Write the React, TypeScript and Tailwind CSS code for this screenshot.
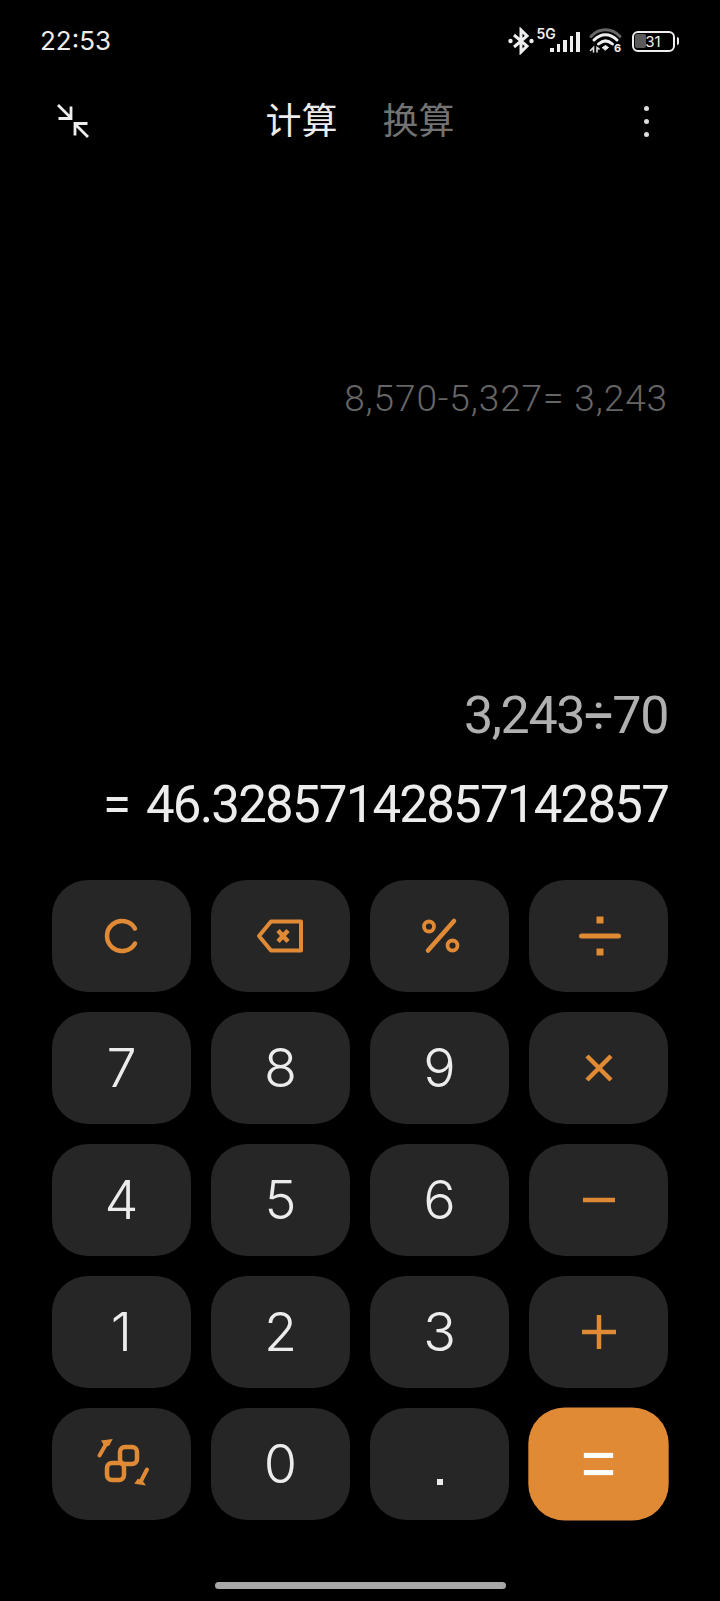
import React from "react";

const O = "#e08a36";

function Key({ children, cls = "" }: { children: React.ReactNode; cls?: string }) {
  return (
    <div className={`flex h-[112px] items-center justify-center rounded-[36px] text-[54px] font-light leading-none text-[#ececec] ${cls || "bg-[#262626]"}`}>
      {children}
    </div>
  );
}

const Icon = ({ children }: { children: React.ReactNode }) => (
  <svg width={60} height={60} viewBox="0 0 60 60" fill="none" stroke={O} strokeWidth="4">{children}</svg>
);

export default function App() {
  return (
    <div className="flex h-[1601px] w-[720px] flex-col overflow-hidden bg-black font-['Inter','Noto_Sans_CJK_SC',sans-serif] text-white">
      {/* status bar */}
      <div className="flex h-[82px] shrink-0 items-center justify-between pl-[40px] pr-[41px]">
        <span className="text-[26px] leading-none text-[#ececec]">22:53</span>
        <div className="flex items-center">
          <svg width="26" height="28" viewBox="0 0 26 28" fill="none" stroke="#eee" strokeWidth="3" className="mr-[3px]">
            <path d="M6 8 L19 19 L13 25 V3 L19 9 L6 20" />
            <circle cx="2.5" cy="14" r="2.2" fill="#eee" stroke="none" />
            <circle cx="23.5" cy="14" r="2.2" fill="#eee" stroke="none" />
          </svg>
          <div className="relative mr-[9px] h-[26px] w-[43px]">
            <span className="absolute left-0 top-[-1px] text-[14px] font-semibold leading-[14px] text-[#eee]">5G</span>
            <div className="absolute bottom-[2px] right-0 flex items-end gap-[3px]">
              <div className="h-[4px] w-[3.5px] bg-[#eee]" />
              <div className="h-[8px] w-[3.5px] bg-[#eee]" />
              <div className="h-[12px] w-[3.5px] bg-[#eee]" />
              <div className="h-[16px] w-[3.5px] bg-[#eee]" />
              <div className="h-[20px] w-[3.5px] bg-[#eee]" />
            </div>
          </div>
          <svg width="33" height="26" viewBox="0 0 33 26" fill="none" strokeLinecap="round" className="mr-[10px]">
            <path d="M2 8.5 C10 -0.5 23 -0.5 31 8.5" stroke="#666" strokeWidth="3" />
            <path d="M5 12 C12 5 21 5 28 12" stroke="#eee" strokeWidth="3" />
            <path d="M9.5 16 C14 12 19 12 23.5 16" stroke="#eee" strokeWidth="3" />
            <path d="M13.5 19.5 L16.5 17.5 L19.5 19.5 L16.5 22 Z" fill="#eee" stroke="#eee" strokeWidth="1" />
            <path d="M1.5 22.5 L4.5 19.5 V24 M8 24 V19.5 L10 21" stroke="#ddd" strokeWidth="1.6" />
            <text x="25" y="24" fontSize="11" fontWeight="700" fill="#eee" fontFamily="Inter" stroke="none">6</text>
          </svg>
          <div className="relative flex h-[21px] w-[43px] items-center justify-center rounded-[6px] border-[2px] border-[#eee]">
            <div className="absolute bottom-[1.5px] left-[1.5px] top-[1.5px] w-[11px] rounded-[2px] bg-[#5a5a5a]" />
            <span className="relative text-[15px] leading-none text-[#eee]">31</span>
          </div>
          <div className="ml-[2px] h-[8px] w-[2.5px] rounded-r-[2px] bg-[#eee]" />
        </div>
      </div>

      {/* header */}
      <div className="grid h-[78px] shrink-0 grid-cols-[1fr_auto_1fr] items-center">
        <div className="flex pl-[55px]">
          <svg width="36" height="36" viewBox="0 0 36 36" fill="none" stroke="#eee" strokeWidth="2.8">
            <path d="M3 2 L16 15 M3.5 15.5 H16 V3.5" />
            <path d="M33 34 L20 21 M32.5 20.5 H20 V32.5" />
          </svg>
        </div>
        <div className="flex items-center gap-[45px] text-[36px] leading-none">
          <span className="text-[#ececec]">计算</span>
          <span className="text-[#737373]">换算</span>
        </div>
        <div className="flex justify-end pr-[71px]">
          <div className="flex flex-col gap-[8px]">
            <div className="h-[5px] w-[5px] rounded-full bg-[#ddd]" />
            <div className="h-[5px] w-[5px] rounded-full bg-[#ddd]" />
            <div className="h-[5px] w-[5px] rounded-full bg-[#ddd]" />
          </div>
        </div>
      </div>

      {/* display */}
      <div className="flex flex-1 flex-col items-end pr-[52px] font-['Roboto','Noto_Sans_CJK_SC',sans-serif]">
        <div className="mt-[217px] text-[37px] font-light leading-[44px] tracking-[0.9px] text-[#666666]">8,570-5,327= 3,243</div>
        <div className="mt-[265px] text-[52px] leading-[60px] tracking-[-1.4px] text-[#b0b0b0]">3,243÷70</div>
        <div className="mt-[29px] text-[51px] leading-[60px] tracking-[-1.8px] text-[#ececec] [word-spacing:6px]">= 46.32857142857142857</div>
      </div>

      {/* keypad */}
      <div className="grid shrink-0 grid-cols-4 gap-x-[20px] gap-y-[20px] px-[52px]">
        <Key>
          <Icon><path d="M43 22.5 A15 15 0 1 0 43 37.5" strokeWidth="4.5" strokeLinecap="round" /></Icon>
        </Key>
        <Key>
          <Icon>
            <path d="M20 15.5 H50 V44.5 H20 L8 30 Z" strokeLinejoin="round" />
            <path d="M27 24.5 L37 35.5 M37 24.5 L27 35.5" strokeWidth="4.5" />
          </Icon>
        </Key>
        <Key>
          <Icon>
            <circle cx="19" cy="20.5" r="5" strokeWidth="3.8" />
            <circle cx="42.5" cy="39.5" r="5" strokeWidth="3.8" />
            <path d="M44 15 L18 44.5" strokeWidth="4.5" strokeLinecap="round" />
          </Icon>
        </Key>
        <Key>
          <Icon>
            <path d="M12.5 30 H49.5" strokeWidth="5" strokeLinecap="round" />
            <rect x="27.5" y="10.5" width="7" height="7" fill={O} stroke="none" />
            <rect x="27.5" y="42.5" width="7" height="7" fill={O} stroke="none" />
          </Icon>
        </Key>
        <Key>7</Key>
        <Key>8</Key>
        <Key>9</Key>
        <Key>
          <Icon><path d="M18 18 L42 42 M42 18 L18 42" strokeWidth="4.5" /></Icon>
        </Key>
        <Key>4</Key>
        <Key>5</Key>
        <Key>6</Key>
        <Key>
          <Icon><path d="M14 30 H46" strokeWidth="4.5" /></Icon>
        </Key>
        <Key>1</Key>
        <Key>2</Key>
        <Key>3</Key>
        <Key>
          <Icon><path d="M13 30 H47 M30 13 V47" strokeWidth="4.5" /></Icon>
        </Key>
        <Key>
          <Icon>
            <rect x="15" y="29" width="17" height="17" rx="5" strokeWidth="4.5" />
            <rect x="28" y="13" width="17" height="17" rx="5" strokeWidth="4.5" />
            <path d="M7.5 21.5 L13.5 11" strokeLinecap="round" />
            <path d="M9 6.5 L20.7 5 L17.3 11.5 L13 13 Z" fill={O} stroke="none" />
            <path d="M55 35.5 L49 47" strokeLinecap="round" />
            <path d="M54 51.5 L42.3 49.8 L45.7 44.8 L50 46 Z" fill={O} stroke="none" />
          </Icon>
        </Key>
        <Key>0</Key>
        <Key>
          <div className="mt-[35px] h-[6px] w-[6px] bg-[#ececec]" />
        </Key>
        <Key cls="bg-[#e08a36] scale-[1.01]">
          <div className="flex flex-col gap-[12px]">
            <div className="h-[5px] w-[29px] bg-white" />
            <div className="h-[5px] w-[29px] bg-white" />
          </div>
        </Key>
      </div>

      {/* home bar */}
      <div className="flex h-[81px] shrink-0 justify-center pt-[62px]">
        <div className="h-[7px] w-[291px] rounded-full bg-[#a8a8a8]" />
      </div>
    </div>
  );
}
